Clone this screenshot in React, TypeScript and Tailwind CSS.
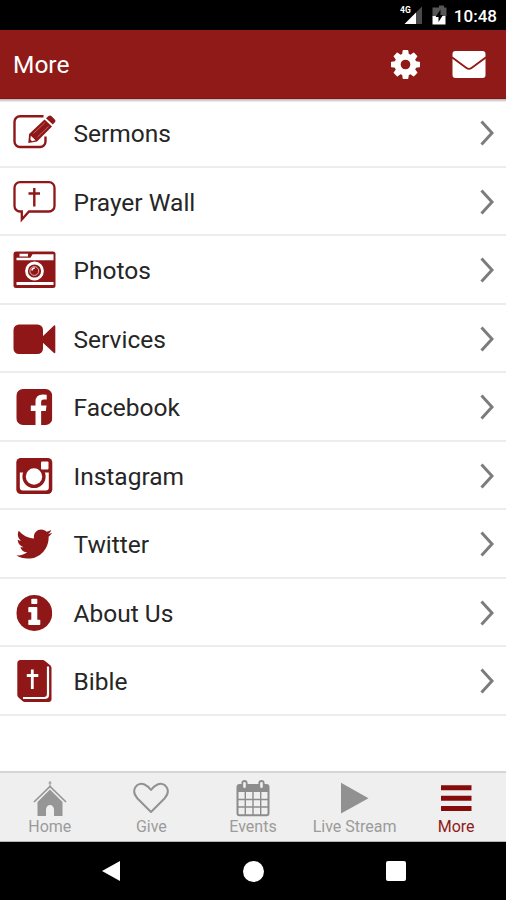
import type { ReactNode } from 'react';
import { FaTwitter } from 'react-icons/fa';

const RED = '#8f1717';

function RowIcon({ children }: { children: ReactNode }) {
  return (
    <svg width="44" height="44" viewBox="0 0 44 44" fill="none">
      {children}
    </svg>
  );
}

function TabIcon({ children }: { children: ReactNode }) {
  return (
    <svg width="40" height="40" viewBox="0 0 40 40" fill="none">
      {children}
    </svg>
  );
}

const items = [
  {
    label: 'Sermons',
    icon: (
      <RowIcon>
        <path d="M31.500 5.300H8a5.500 5.500 0 0 0-5.500 5.500V30.500A5.500 5.500 0 0 0 8 36h20a5.500 5.500 0 0 0 5.500-5.500v-5" stroke={RED} strokeWidth="2.400" />
        <path d="M16.300 32l.8-9L32.500 8.500l7.500 7L25 30.500z" fill={RED} />
        <path d="M34 7.300l2.600-2.300q1.500-1.200 3 .3l3.200 3.200q1.300 1.500 0 2.800L40.800 13.500z" fill={RED} />
        <path d="M21.500 22.500L33 11.500M25.500 26L36.500 15.500" stroke="#c98a8a" strokeWidth=".7" />
        <path d="M18.800 24.700l4.800 4.600-3.600.9-1.600-1.600z" fill="#fff" />
      </RowIcon>
    ),
  },
  {
    label: 'Prayer Wall',
    icon: (
      <RowIcon>
        <path d="M8 2.200h29a5.500 5.500 0 0 1 5.500 5.500V26a5.500 5.500 0 0 1-5.500 5.500H17L9.800 39.500V31.500H8A5.500 5.500 0 0 1 2.500 26V7.700A5.500 5.500 0 0 1 8 2.200z" stroke={RED} strokeWidth="2.300" />
        <path d="M22.300 8V26.500M16.500 13.500H28" stroke={RED} strokeWidth="2.400" />
      </RowIcon>
    ),
  },
  {
    label: 'Photos',
    icon: (
      <RowIcon>
        <rect x="1.500" y="3.500" width="42" height="36.500" rx="2.500" fill={RED} />
        <path d="M7.500 5.800h8.500v2.800H7.500zM4.500 9.800h14l2-3.500h21v6h-37zM4.500 34h37v3h-37z" fill="#fff" />
        <circle cx="22.500" cy="23" r="8" fill={RED} stroke="#fff" strokeWidth="2.800" />
        <circle cx="22.300" cy="23" r="4.400" stroke="#e6c4c4" strokeWidth=".9" />
        <path d="M19.800 22.500q.5-2.500 3-2.500" stroke="#fff" strokeWidth="1.400" />
      </RowIcon>
    ),
  },
  {
    label: 'Services',
    icon: (
      <RowIcon>
        <rect x="1.500" y="7.500" width="29.500" height="29.500" rx="5.500" fill={RED} />
        <path d="M29 21L42 8.500q1.300-.7 1.300 1V35q0 1.700-1.300 1L29 24z" fill={RED} />
      </RowIcon>
    ),
  },
  {
    label: 'Facebook',
    icon: (
      <RowIcon>
        <svg x="4.300" y="4" width="36" height="36" viewBox="0 128 1536 1536">
          <path
            fill={RED}
            d="M1248 128q119 0 203.500 84.500t84.500 203.500v960q0 119-84.500 203.500t-203.500 84.500h-188v-595h199l30-232h-229v-148q0-56 23.500-84t91.500-28l122-1v-207q-63-9-178-9-136 0-217.500 80t-81.500 226v171h-200v232h200v595h-532q-119 0-203.500-84.500t-84.500-203.500v-960q0-119 84.500-203.500t203.500-84.500h960z"
          />
        </svg>
      </RowIcon>
    ),
  },
  {
    label: 'Instagram',
    icon: (
      <RowIcon>
        <rect x="4.300" y="4" width="36" height="36" rx="4.500" fill={RED} />
        <path d="M7.800 18.500h29V33.500q0 3-3 3h-23q-3 0-3-3z" fill="#fff" />
        <circle cx="22" cy="22.500" r="11.600" fill={RED} />
        <circle cx="22" cy="22.500" r="8.200" fill="#fff" />
        <rect x="29" y="7.500" width="7.500" height="8" rx="1" fill="#fff" />
      </RowIcon>
    ),
  },
  {
    label: 'Twitter',
    icon: (
      <RowIcon>
        <FaTwitter x="4.300" y="4" size={36} color={RED} />
      </RowIcon>
    ),
  },
  {
    label: 'About Us',
    icon: (
      <RowIcon>
        <svg x="4.300" y="4" width="36" height="36" viewBox="0 128 1536 1536">
          <path
            fill={RED}
            d="M1024 1376v-160q0-14-9-23t-23-9h-96v-512q0-14-9-23t-23-9h-320q-14 0-23 9t-9 23v160q0 14 9 23t23 9h96v320h-96q-14 0-23 9t-9 23v160q0 14 9 23t23 9h448q14 0 23-9t9-23zm-128-896v-160q0-14-9-23t-23-9h-192q-14 0-23 9t-9 23v160q0 14 9 23t23 9h192q14 0 23-9t9-23zm640 416q0 209-103 385.500t-279.500 279.500-385.500 103-385.500-103-279.500-279.500-103-385.500 103-385.500 279.500-279.500 385.500-103 385.500 103 279.500 279.500 103 385.500z"
          />
        </svg>
      </RowIcon>
    ),
  },
  {
    label: 'Bible',
    icon: (
      <RowIcon>
        <path d="M8.500 1h22q1.500 0 2.500 1l5.500 4.500q1 1 1 2.500V40q0 3-3 3H13q-1.500 0-2.500-1l-4-3.500Q5.300 37.300 5.300 35.500V4.500Q5.300 1 8.500 1z" fill={RED} />
        <path d="M36 7.500V35.500q0 3.500-3.500 3.500H11" stroke="#fff" strokeWidth="2.200" />
        <path d="M20.300 10.500V30M14.800 16.500H26.300" stroke="#fff" strokeWidth="2.800" />
      </RowIcon>
    ),
  },
];

const tabs = [
  {
    label: 'Home',
    icon: (
      <TabIcon>
        <path d="M20 3v6M18.500 5h3" stroke="#969696" strokeWidth="1" />
        <path d="M4 24L20 8.500 36 24" stroke="#969696" strokeWidth="1.700" />
        <path d="M20 11.500L32.500 24v14H24V31q-1-4-4-4t-4 4v7H7.500V24z" fill="#969696" />
      </TabIcon>
    ),
  },
  {
    label: 'Give',
    icon: (
      <TabIcon>
        <path d="M20 34L6.500 20.500C-1 12 6 3.500 13.500 6.500Q17 8 20 12 23 8 26.500 6.500C34 3.500 41 12 33.500 20.500z" stroke="#929292" strokeWidth="2" strokeLinejoin="round" />
      </TabIcon>
    ),
  },
  {
    label: 'Events',
    icon: (
      <TabIcon>
        <rect x="4.500" y="7" width="31" height="30.200" rx="2" stroke="#8c8c8c" strokeWidth="2" />
        <path d="M4 7.500h32v6.500H4z" fill="#8c8c8c" />
        <path d="M5 21.500h30M5 29h30M12.300 13v24M20 13v24M27.700 13v24" stroke="#8c8c8c" strokeWidth="1.400" />
        <rect x="9.300" y="3" width="4.400" height="8" rx="2.200" fill="#efefef" stroke="#8c8c8c" strokeWidth="1.800" />
        <rect x="26.300" y="3" width="4.400" height="8" rx="2.200" fill="#efefef" stroke="#8c8c8c" strokeWidth="1.800" />
      </TabIcon>
    ),
  },
  {
    label: 'Live Stream',
    icon: (
      <TabIcon>
        <path d="M6 4.800L33.500 20.300 6 35.500z" fill="#919191" />
      </TabIcon>
    ),
  },
  {
    label: 'More',
    active: true,
    icon: (
      <TabIcon>
        <path d="M5 9.800h30.500M5 20.200h30.500M5 30.600h30.500" stroke="#860b0b" strokeWidth="5" />
      </TabIcon>
    ),
  },
];

function StatusBar() {
  return (
    <div className="flex h-[30px] items-center justify-end bg-black pr-[9px] text-white">
      <svg width="54" height="30" viewBox="0 0 54 30">
        <text x="0" y="13" fontSize="8.500" fontWeight="700" fill="#fff" fontFamily="Roboto">4G</text>
        <path d="M22 6.500V24H16V12.500z" fill="#4a4a4a" />
        <path d="M16 12.500V24H4.500z" fill="#fff" />
        <path d="M36 7.500h3V5.500h5v2h2.500V16H32.500V7.500z" fill="#565656" />
        <path d="M32.500 16h13v8.500h-13z" fill="#fff" />
        <path d="M40.500 9.500l-5 7.500h3v5l4.500-7h-2.500z" fill="#000" />
      </svg>
      <span className="pt-[3px] text-[17px] leading-none font-medium">10:48</span>
    </div>
  );
}

function Header() {
  return (
    <header className="flex h-[69px] items-center border-b border-[#831313] bg-[#8f1a18] pr-5 pl-[13px] text-white">
      <h1 className="flex-1 pt-[3px] text-[24.5px] leading-none">More</h1>
      <svg className="mr-8" width="29" height="29" viewBox="0 128 1536 1536">
        <path
          fill="#fff"
          d="M1024 896q0-106-75-181t-181-75-181 75-75 181 75 181 181 75 181-75 75-181zm512-109v222q0 12-8 23t-20 13l-185 28q-19 54-39 91 35 50 107 138 10 12 10 25t-9 23q-27 37-99 108t-94 71q-12 0-26-9l-138-108q-44 23-91 38-16 136-29 186-7 28-36 28h-222q-14 0-24.500-8.500t-11.500-21.500l-28-184q-49-16-90-37l-141 107q-10 9-25 9-14 0-25-11-126-114-165-168-7-10-7-23 0-12 8-23 15-21 51-66.500t54-70.500q-27-50-41-99l-183-27q-13-2-21-12.500t-8-23.500v-222q0-12 8-23t19-13l186-28q14-46 39-92-40-57-107-138-10-12-10-24 0-10 9-23 26-36 98.500-107.500t94.500-71.500q13 0 26 10l138 107q44-23 91-38 16-136 29-186 7-28 36-28h222q14 0 24.500 8.500t11.500 21.500l28 184q49 16 90 37l142-107q9-9 24-9 13 0 25 10 129 119 165 170 7 8 7 22 0 12-8 23-15 21-51 66.500t-54 70.500q26 50 41 98l183 28q13 2 21 12.500t8 23.500z"
        />
      </svg>
      <svg width="34" height="27" viewBox="0 0 34 27">
        <rect x=".5" width="33" height="27" rx="3" fill="#fff" />
        <path d="M0 6.300L14.500 17q2.500 1.800 5 0L34 6.300" fill="none" stroke="#8f1a18" strokeWidth="1.800" />
      </svg>
    </header>
  );
}

export default function App() {
  return (
    <div className="flex h-[900px] w-[506px] flex-col overflow-hidden bg-white font-['Roboto',sans-serif]">
      <StatusBar />
      <Header />
      <div className="h-[3px] shrink-0 bg-linear-to-b from-[#b9b0b0] to-[#f4f4f8]" />
      <ul className="-mt-[3px] flex-1">
        {items.map((item) => (
          <li key={item.label} className="flex h-[68.5px] items-center border-b-2 border-[#ececec] px-3 pt-0.5">
            {item.icon}
            <span className="flex-1 pt-0.5 pl-[17.5px] text-[24.5px] leading-none text-[#262626]">
              {item.label}
            </span>
            <svg width="14" height="26" viewBox="0 0 14 26" fill="none">
              <path d="M1.500 1.500L12 13 1.500 24.500" stroke="#7c7c7c" strokeWidth="3" />
            </svg>
          </li>
        ))}
      </ul>
      <nav className="h-[71px] border-t-2 border-b border-t-[#d5d5d5] border-b-[#b5b5b5] bg-[#efefef]">
        <div className="-mx-px grid grid-cols-5">
          {tabs.map((tab) => (
            <div key={tab.label} className="flex flex-col items-center pt-[5px]">
              {tab.icon}
              <span
                className={`pt-px text-[16px] leading-none whitespace-nowrap ${tab.active ? 'text-[#8f1a18]' : 'text-[#9b9b9b]'}`}
              >
                {tab.label}
              </span>
            </div>
          ))}
        </div>
      </nav>
      <div className="flex h-[58px] items-center justify-center gap-[122px] bg-black">
        <svg width="20" height="22" viewBox="0 0 20 22">
          <path d="M1 11L19 1v20z" fill="#fff" />
        </svg>
        <div className="h-[21px] w-[21px] rounded-full bg-white" />
        <div className="h-5 w-5 rounded-[2px] bg-white" />
      </div>
    </div>
  );
}
